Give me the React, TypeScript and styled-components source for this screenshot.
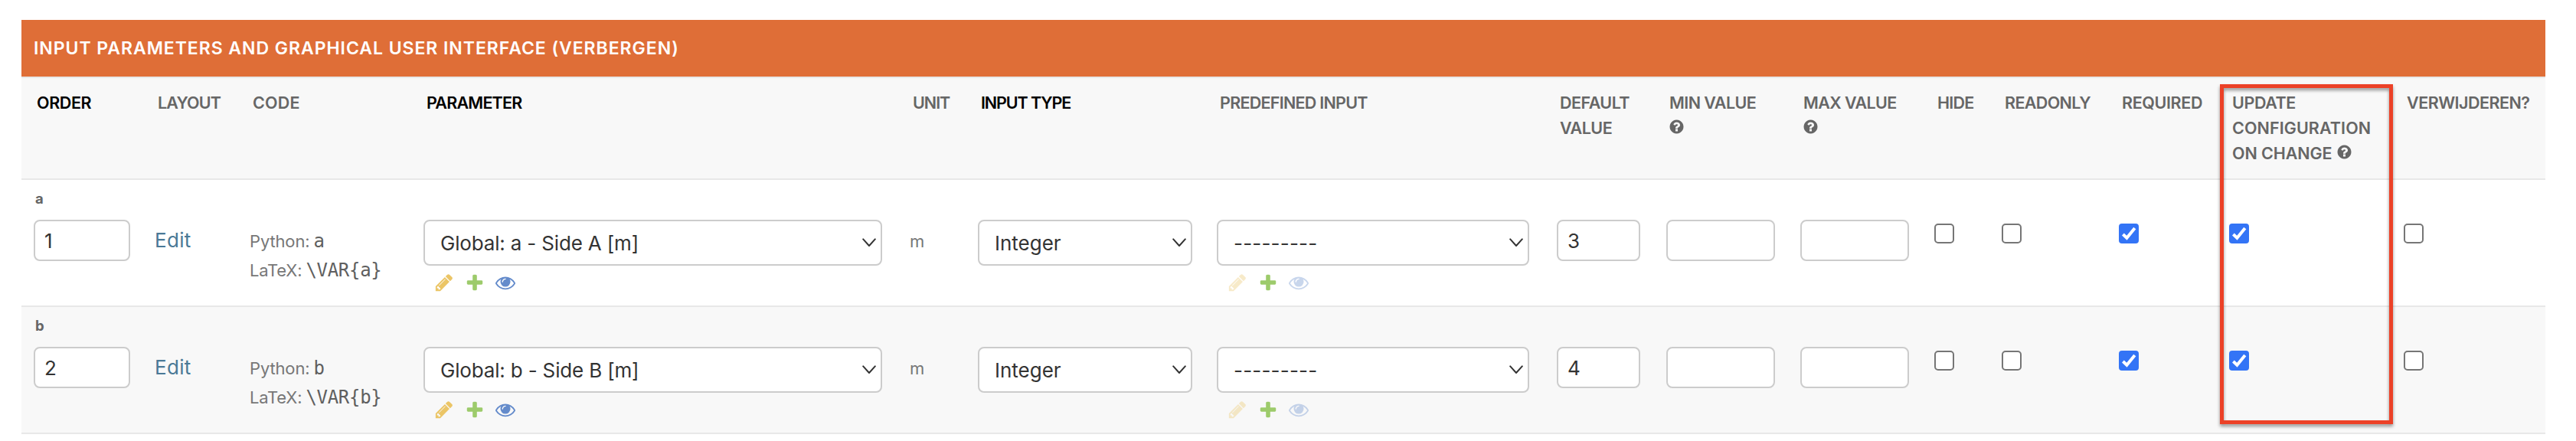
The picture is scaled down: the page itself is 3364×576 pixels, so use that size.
import React from "react";
import styled, { createGlobalStyle, css } from "styled-components";

const GlobalStyle = createGlobalStyle`
  *, *::before, *::after { box-sizing: border-box; }
  body {
    margin: 0;
    background: #fff;
    color: #333;
    font-family: Inter, "Liberation Sans", sans-serif;
    font-size: 26px;
  }
`;

const columns = "158px 124px 227px 635px 89px 312px 444px 143px 175px 175px 88px 153px 144px 228px 1fr";

const Page = styled.main`
  height: 576px;
  padding: 26px 40px 0 28px;
  overflow: hidden;
`;

const Fieldset = styled.section`
  position: relative;
`;

const Title = styled.h2`
  height: 74px;
  margin: 0;
  padding: 0 16px;
  background: #df6e37;
  color: #fff;
  font: 600 23px/74px Inter, sans-serif;
  letter-spacing: 0.96px;
  white-space: nowrap;
`;

const HeadRow = styled.div`
  display: grid;
  grid-template-columns: ${columns};
  height: 135px;
  background: #f8f8f8;
  border-top: 2px solid #e8e8e8;
  border-bottom: 2px solid #e8e8e8;
`;

const HeadCell = styled.div<{ $required?: boolean }>`
  padding: 16px 0 0 20px;
  color: ${(p) => (p.$required ? "#000" : "#666")};
  font: 600 21.5px/33px Inter, sans-serif;
  white-space: nowrap;
`;

const HeadLine = styled.div<{ $track: number }>`
  display: flex;
  align-items: center;
  height: 33px;
  letter-spacing: ${(p) => p.$track}px;
`;

const HelpSvg = styled.svg<{ $inline?: boolean }>`
  width: 21px;
  height: 21px;
  flex: none;
  margin: ${(p) => (p.$inline ? "-5px 0 0 6px" : "-5px 0 0 -1px")};
  fill: #666;
`;

const Row = styled.div<{ $alt?: boolean }>`
  display: grid;
  grid-template-columns: ${columns};
  grid-template-rows: 52px 112px;
  height: 166px;
  background: ${(p) => (p.$alt ? "#f8f8f8" : "#fff")};
  border-bottom: 2px solid #e8e8e8;
`;

const RowName = styled.div`
  grid-column: 1 / -1;
  padding: 13px 0 0 18px;
  color: #666;
  font-size: 18.5px;
  font-weight: 700;
  line-height: 22px;
`;

const Cell = styled.div`
  padding-left: 16px;
`;

const field = css`
  border: 2px solid #ccc;
  border-radius: 8px;
  background: #fff;
  color: #333;
`;

const Input = styled.input<{ $width: number }>`
  ${field}
  display: block;
  width: ${(p) => p.$width}px;
  height: 54px;
  margin: 0;
  padding: 0 12px;
  font: 400 26px Inter, sans-serif;
  outline: none;
`;

const SelectBox = styled.div<{ $width: number }>`
  ${field}
  display: flex;
  align-items: center;
  justify-content: space-between;
  width: ${(p) => p.$width}px;
  height: 60px;
  padding: 0 6px 0 20px;
  white-space: nowrap;
`;

const SelectText = styled.span<{ $track: number }>`
  letter-spacing: ${(p) => p.$track}px;
`;

const Chevron = styled.svg`
  width: 18px;
  height: 12px;
  fill: none;
  stroke: #333;
  stroke-width: 2;
  stroke-linecap: round;
  stroke-linejoin: round;
`;

const IconRow = styled.div`
  display: flex;
  gap: 14px;
  padding: 9px 0 0 14px;
`;

const Icon = styled.svg<{ $color: string; $dim?: boolean }>`
  width: 26px;
  height: 26px;
  fill: ${(p) => p.$color};
  opacity: ${(p) => (p.$dim ? 0.35 : 1)};
`;

const EditLink = styled.a`
  display: block;
  padding-top: 11px;
  color: #4a7996;
  line-height: 32px;
  letter-spacing: 0.3px;
  text-decoration: none;
`;

const CodeLine = styled.div`
  display: flex;
  align-items: baseline;
  gap: 5px;
  height: 38px;
  color: #777;
  font-size: 22px;
  line-height: 38px;
  letter-spacing: -0.15px;
  white-space: nowrap;

  &:first-child { margin-top: 9px; }
`;

const Code = styled.code`
  color: #5f5f5f;
  font: 24px/38px "DejaVu Sans Mono", monospace;
  letter-spacing: -0.3px;
`;

const Unit = styled.div`
  padding-top: 9px;
  color: #777;
  font-size: 22px;
  line-height: 38px;
`;

const Box = styled.span<{ $checked?: boolean }>`
  display: block;
  width: 26px;
  height: 26px;
  margin: 5px 0 0 0;
  border: 2px solid ${(p) => (p.$checked ? "#3374f6" : "#767676")};
  border-radius: ${(p) => (p.$checked ? 4 : 5)}px;
  background: ${(p) => (p.$checked ? "#3374f6" : "#fff")};
`;

const Tick = styled.svg`
  display: block;
  width: 22px;
  height: 22px;
  fill: none;
  stroke: #fff;
  stroke-width: 4;
`;

const Highlight = styled.div`
  position: absolute;
  left: 2871px;
  top: 84px;
  width: 226px;
  height: 444px;
  border: 5px solid #ec4127;
  filter: drop-shadow(0 3px 2px rgba(0, 0, 0, 0.4));
  pointer-events: none;
`;

const PENCIL =
  "M491 1536l91-91-235-235-91 91v107h128v128h107zm523-928q0-22-22-22-10 0-17 7l-542 542q-7 7-7 17 0 22 22 22 10 0 17-7l542-542q7-7 7-17zm-54-192l416 416-832 832h-416v-416zm683 96q0 53-37 90l-166 166-416-416 166-165q36-38 90-38 53 0 91 38l235 234q37 39 37 91z";
const PLUS =
  "M1600 796v192q0 40-28 68t-68 28h-416v416q0 40-28 68t-68 28h-192q-40 0-68-28t-28-68v-416h-416q-40 0-68-28t-28-68v-192q0-40 28-68t68-28h416v-416q0-40 28-68t68-28h192q40 0 68 28t28 68v416h416q40 0 68 28t28 68z";
const EYE =
  "M1664 960q-152-236-381-353 61 104 61 225 0 185-131.5 316.5t-316.5 131.5-316.5-131.5-131.5-316.5q0-121 61-225-229 117-381 353 133 205 333.5 326.5t434.5 121.5 434.5-121.5 333.5-326.5zm-720-384q0-20-14-34t-34-14q-125 0-214.5 89.5t-89.5 214.5q0 20 14 34t34 14 34-14 14-34q0-86 61-147t147-61q20 0 34-14t14-34zm848 384q0 34-20 69-140 230-376.5 368.5t-499.5 138.5-499.5-139-376.5-368q-20-35-20-69t20-69q140-229 376.5-368t499.5-139 499.5 139 376.5 368q20 35 20 69z";
const HELP =
  "M1024 1376v-192q0-14-9-23t-23-9h-192q-14 0-23 9t-9 23v192q0 14 9 23t23 9h192q14 0 23-9t9-23zm256-672q0-88-55.5-163t-138.5-116-170-41q-243 0-371 213-15 24 8 42l132 100q7 6 19 6 16 0 25-12 53-68 86-92 34-24 86-24 48 0 85.5 26t37.5 59q0 38-20 61t-68 45q-63 28-115.5 86.5t-52.5 125.5v36q0 14 9 23t23 9h192q14 0 23-9t9-23q0-19 21.5-49.5t54.5-49.5q32-18 49-28.5t46-35 44.5-48 28-60.5 12.5-81zm384 192q0 209-103 385.5t-279.5 279.5-385.5 103-385.5-103-279.5-279.5-103-385.5 103-385.5 279.5-279.5 385.5-103 385.5 103 279.5 279.5 103 385.5z";

function Help({ inline }: { inline?: boolean }) {
  return (
    <HelpSvg viewBox="0 0 1792 1792" $inline={inline}>
      <path d={HELP} />
    </HelpSvg>
  );
}

function RelatedIcons({ dim }: { dim?: boolean }) {
  return (
    <IconRow>
      <Icon viewBox="0 0 1792 1792" $color="#ebc566" $dim={dim}><path d={PENCIL} /></Icon>
      <Icon viewBox="0 0 1792 1792" $color="#9dcb6b"><path d={PLUS} /></Icon>
      <Icon viewBox="0 0 1792 1792" $color="#648bcb" $dim={dim}><path d={EYE} /></Icon>
    </IconRow>
  );
}

function Select({ text, width, track = 0 }: { text: string; width: number; track?: number }) {
  return (
    <SelectBox $width={width}>
      <SelectText $track={track}>{text}</SelectText>
      <Chevron viewBox="0 0 18 12"><path d="M1.2 1.4 9 10 16.8 1.4" /></Chevron>
    </SelectBox>
  );
}

function Checkbox({ checked }: { checked?: boolean }) {
  return (
    <Box $checked={checked} role="checkbox" aria-checked={!!checked}>
      {checked && <Tick viewBox="0 0 22 22"><path d="M3.4 12 8.4 16.8 18.8 4" /></Tick>}
    </Box>
  );
}

type HeadLineData = { text?: string; track?: number; help?: boolean };
type Head = { required?: boolean; lines: HeadLineData[] };

const heads: Head[] = [
  { required: true, lines: [{ text: "ORDER", track: -0.38 }] },
  { lines: [{ text: "LAYOUT", track: -0.86 }] },
  { lines: [{ text: "CODE", track: 0.2 }] },
  { required: true, lines: [{ text: "PARAMETER", track: -0.78 }] },
  { lines: [{ text: "UNIT", track: -1 }] },
  { required: true, lines: [{ text: "INPUT TYPE", track: -1.1 }] },
  { lines: [{ text: "PREDEFINED INPUT", track: -0.73 }] },
  { lines: [{ text: "DEFAULT", track: -0.52 }, { text: "VALUE", track: -0.5 }] },
  { lines: [{ text: "MIN VALUE", track: -0.55 }, { help: true }] },
  { lines: [{ text: "MAX VALUE", track: -0.6 }, { help: true }] },
  { lines: [{ text: "HIDE", track: -0.77 }] },
  { lines: [{ text: "READONLY", track: -0.63 }] },
  { lines: [{ text: "REQUIRED", track: -0.37 }] },
  {
    lines: [
      { text: "UPDATE", track: -0.4 },
      { text: "CONFIGURATION", track: 0.09 },
      { text: "ON CHANGE", track: -0.09, help: true },
    ],
  },
  { lines: [{ text: "VERWIJDEREN?", track: -0.51 }] },
];

const rows = [
  { name: "a", order: "1", parameter: "Global: a - Side A [m]", value: "3" },
  { name: "b", order: "2", parameter: "Global: b - Side B [m]", value: "4" },
];

export default function App() {
  return (
    <Page>
      <GlobalStyle />
      <Fieldset>
        <Title>INPUT PARAMETERS AND GRAPHICAL USER INTERFACE (VERBERGEN)</Title>
        <HeadRow>
          {heads.map((head, i) => (
            <HeadCell key={i} $required={head.required}>
              {head.lines.map((line, j) => (
                <HeadLine key={j} $track={line.track ?? 0}>
                  {line.text}
                  {line.help && <Help inline={!!line.text} />}
                </HeadLine>
              ))}
            </HeadCell>
          ))}
        </HeadRow>
        {rows.map((row, i) => (
          <Row key={row.name} $alt={i % 2 === 1}>
            <RowName>{row.name}</RowName>
            <Cell><Input $width={126} defaultValue={row.order} /></Cell>
            <Cell><EditLink>Edit</EditLink></Cell>
            <Cell>
              <CodeLine>Python: <Code>{row.name}</Code></CodeLine>
              <CodeLine>LaTeX: <Code>{`\\VAR{${row.name}}`}</Code></CodeLine>
            </Cell>
            <Cell>
              <Select text={row.parameter} width={599} track={-0.17} />
              <RelatedIcons />
            </Cell>
            <Cell><Unit>m</Unit></Cell>
            <Cell><Select text="Integer" width={280} /></Cell>
            <Cell>
              <Select text="---------" width={408} track={0.19} />
              <RelatedIcons dim />
            </Cell>
            <Cell><Input $width={109} defaultValue={row.value} /></Cell>
            <Cell><Input $width={142} /></Cell>
            <Cell><Input $width={142} /></Cell>
            <Cell><Checkbox /></Cell>
            <Cell><Checkbox /></Cell>
            <Cell><Checkbox checked /></Cell>
            <Cell><Checkbox checked /></Cell>
            <Cell><Checkbox /></Cell>
          </Row>
        ))}
        <Highlight />
      </Fieldset>
    </Page>
  );
}
